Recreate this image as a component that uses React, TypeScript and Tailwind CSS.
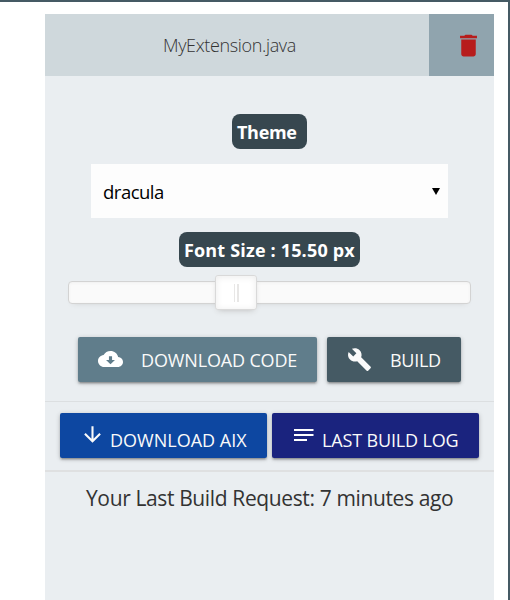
import { MdBuild, MdDelete, MdArrowDownward } from "react-icons/md";

const raised =
  "flex h-[45px] items-center rounded-[2px] text-[18px] leading-[27px] text-[#fafafa] whitespace-nowrap shadow-[0_2px_2px_0_rgba(0,0,0,0.18),0_3px_1px_-2px_rgba(0,0,0,0.12),0_1px_5px_0_rgba(0,0,0,0.2)]";

const badge =
  "flex h-[35px] items-center rounded-[8px] bg-[#37474f] pt-[2px] text-[18px] font-bold text-white whitespace-nowrap";

function CloudIcon() {
  return (
    <svg className="mr-[18px] mb-px h-[16px] w-[25px] shrink-0" viewBox="0 4 24 16" preserveAspectRatio="none" fill="#fff">
      <path
        fillRule="evenodd"
        d="M19.35 10.04C18.67 6.59 15.64 4 12 4 9.11 4 6.6 5.64 5.35 8.04 2.34 8.36 0 10.91 0 14c0 3.31 2.69 6 6 6h13c2.76 0 5-2.24 5-5 0-2.64-2.05-4.78-4.65-4.96zM16.3 13L12 17.2 7.7 13h2.8V9.2h3V13h2.8z"
      />
    </svg>
  );
}

function NotesIcon() {
  return (
    <svg className="mr-[8px] h-[12px] w-[20px] shrink-0" viewBox="0 0 20 12" fill="#fff">
      <path d="M0 0h19.5v2H0zM0 5h19.5v2H0zM0 10h13v2H0z" />
    </svg>
  );
}

export default function App() {
  return (
    <div className="h-[600px] w-[510px] overflow-hidden border-t-2 border-r-2 border-[#455a64] bg-white pt-3 pl-[45px] font-['Open_Sans','Noto_Sans',sans-serif]">
      <main className="flex h-[586px] w-[449px] flex-col bg-[#eaeef1]">
        <header className="flex h-[62px] shrink-0">
          <div className="flex w-[384px] items-center bg-[#cfd8dc] pl-[118px] text-[18px] font-light text-[#333]">
            <span className="tracking-[-0.35px]">MyExtension.java</span>
          </div>
          <button className="flex w-[65px] items-center bg-[#90a4ae] pl-[25px]">
            <MdDelete className="size-[29px] text-[#b71c1c]" />
          </button>
        </header>

        <div className={`${badge} mt-[38px] ml-[187px] w-[75px] pl-[5px]`}>
          <span className="tracking-[-0.3px]">Theme</span>
        </div>

        <div className="mt-[15px] ml-[46px] flex h-[54px] w-[357px] items-center justify-between bg-[#fdfdfd] pr-[8px] pl-[12px] text-[18.5px] text-black">
          <span className="pt-[2px] tracking-[-0.5px]">dracula</span>
          <svg className="h-[7px] w-[8px]" viewBox="0 0 8 7">
            <path d="M0 0h8L4 7z" />
          </svg>
        </div>

        <div className={`${badge} mt-[14px] ml-[134px] w-[181px] pl-[5px]`}>
          <span className="tracking-[0.17px]">Font Size : 15.50 px</span>
        </div>

        <div className="relative mt-[14px] ml-[23px] h-[23px] w-[403px] shrink-0 rounded-[4px] border border-[#d3d3d3] bg-[#fafafa] shadow-[inset_0_1px_3px_#f0f0f0,0_3px_6px_-5px_#bbb]">
          <div className="absolute -top-[7px] left-[146px] flex h-[35px] w-[42px] items-center justify-center gap-[2px] rounded-[3px] border border-[#d9d9d9] bg-white shadow-[inset_0_0_1px_#fff,inset_0_1px_7px_#ebebeb,0_3px_6px_-3px_#bbb]">
            <i className="h-[18px] w-px bg-[#e8e7e6]" />
            <i className="h-[18px] w-[2px] bg-[#e8e7e6]" />
          </div>
        </div>

        <div className="mt-[33px] ml-[33px] flex gap-[10px]">
          <button className={`${raised} w-[239px] bg-[#607d8b] pl-[20px]`}>
            <CloudIcon />
            <span className="pt-[2px] tracking-[-0.15px]">DOWNLOAD CODE</span>
          </button>
          <button className={`${raised} w-[134px] bg-[#455a64] pl-[20px]`}>
            <MdBuild className="mr-[18px] mb-px size-[25px]" />
            <span className="pt-[2px] tracking-[-0.3px]">BUILD</span>
          </button>
        </div>

        <div className="mt-[19px] h-px shrink-0 bg-[#dcdfe1]" />

        <div className="mt-[11px] ml-[15px] flex gap-[5px]">
          <button className={`${raised} w-[207px] bg-[#0d47a1] pl-[20px]`}>
            <MdArrowDownward className="mr-[5px] mb-[2px] size-[25px]" />
            <span className="pt-[9px]">DOWNLOAD AIX</span>
          </button>
          <button className={`${raised} w-[207px] bg-[#1a237e] pl-[22px]`}>
            <span className="pb-[2px]">
              <NotesIcon />
            </span>
            <span className="pt-[9px] tracking-[-0.15px]">LAST BUILD LOG</span>
          </button>
        </div>

        <div className="mt-[12px] h-[2px] shrink-0 bg-[#dfe0e1]" />

        <p className="mt-[10px] ml-[41px] text-[21px] leading-[32px] tracking-[-0.37px] whitespace-nowrap text-[#333]">
          Your Last Build Request: 7 minutes ago
        </p>
      </main>
    </div>
  );
}
